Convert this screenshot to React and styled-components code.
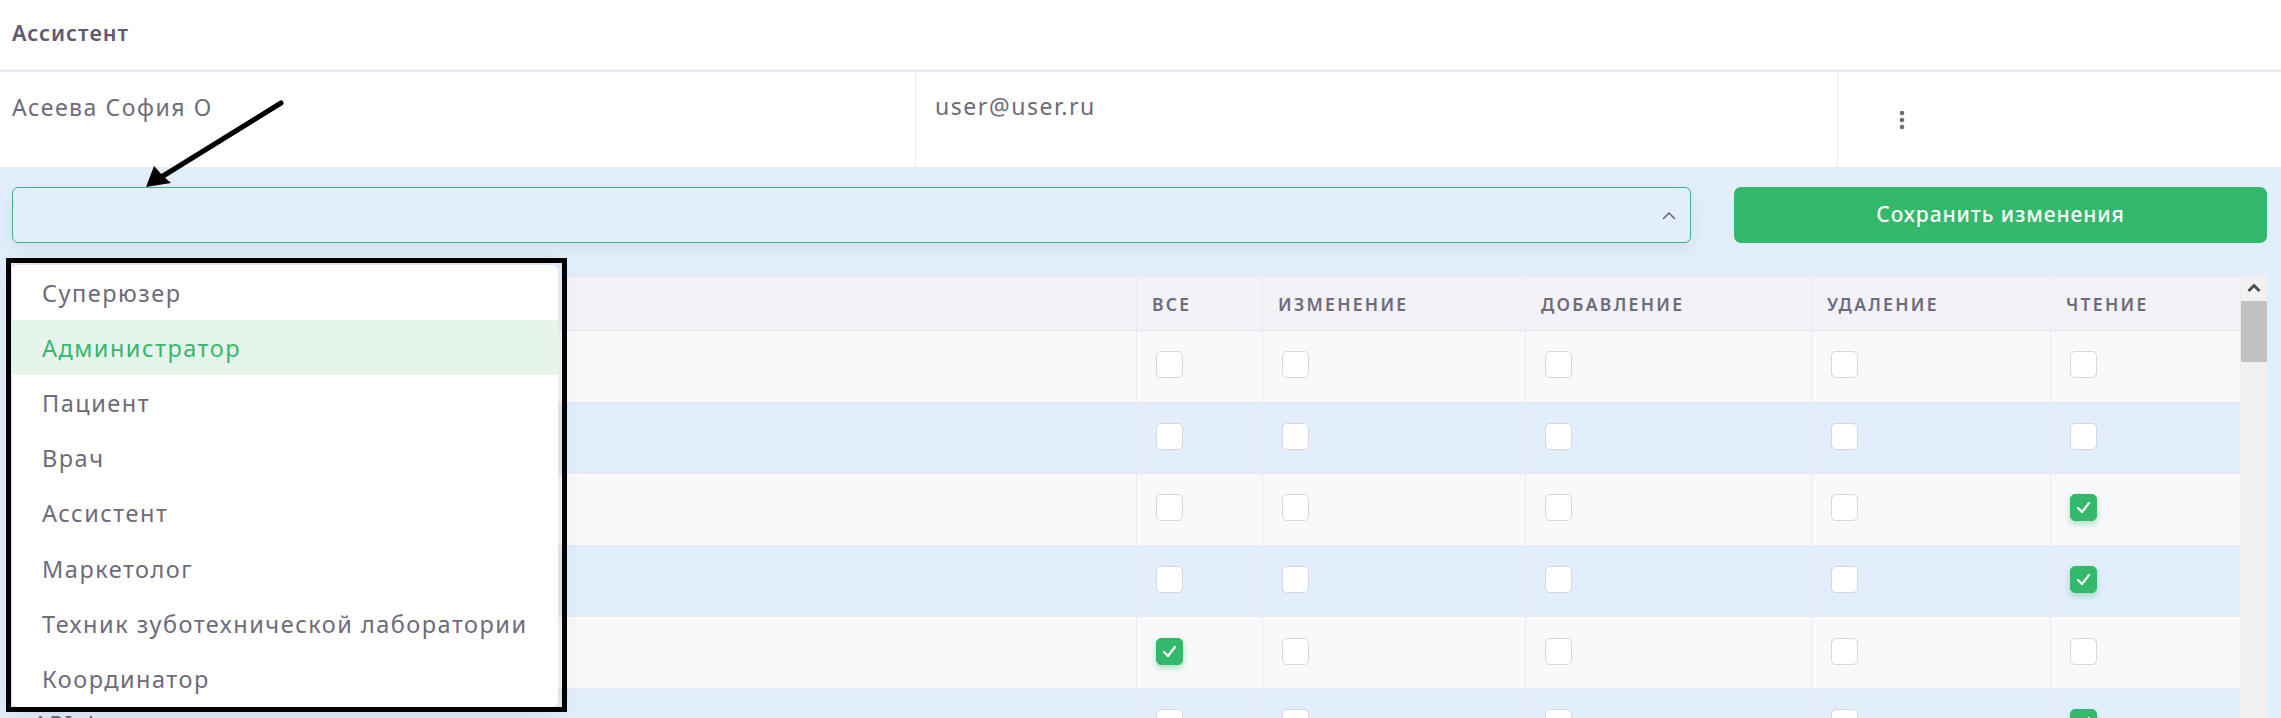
import React from "react";
import styled, { createGlobalStyle } from "styled-components";

const GlobalStyle = createGlobalStyle`
  html, body { margin: 0; padding: 0; }
  body {
    font-family: "Noto Sans", "Open Sans", sans-serif;
    color: #6e6b7b;
    background: #e3eefc;
    overflow: hidden;
  }
  * { box-sizing: border-box; }
`;

const Page = styled.div`
  position: relative;
  width: 2281px;
  height: 718px;
  overflow: hidden;
  display: flex;
  flex-direction: column;
`;

const TitleBar = styled.div`
  height: 72px;
  flex: none;
  background: #fff;
  border-bottom: 3px solid #ebe9f3;
  padding: 0 0 4px 12px;
  display: flex;
  align-items: center;
  font-size: 21.5px;
  font-weight: 600;
  color: #5e5873;
  letter-spacing: 1px;
`;

const UserRow = styled.div`
  height: 96px;
  flex: none;
  background: #fff;
  border-bottom: 1px solid #ebe9f1;
  display: grid;
  grid-template-columns: 916px 922px 1fr;
`;

const UserCell = styled.div`
  padding: ${(p) => p.$pad || "20px 12px"};
  border-right: ${(p) => (p.$last ? "none" : "1px solid #ebe9f1")};
  font-size: 23px;
  line-height: 30px;
  letter-spacing: 1.55px;
  color: #6e6b7b;
  display: flex;
  align-items: ${(p) => (p.$center ? "center" : "flex-start")};
`;

const BlueSection = styled.div`
  flex: 1;
  background: #e3eefc;
  padding: 19px 14px 0 12px;
  display: flex;
  flex-direction: column;
  min-height: 0;
`;

const Controls = styled.div`
  display: flex;
  gap: 43px;
  height: 56px;
  flex: none;
`;

const SelectBox = styled.div`
  flex: 1;
  border: 1px solid #3db57a;
  border-radius: 6px;
  background: #e3eefc;
  box-shadow: 0 6px 16px rgba(34, 41, 47, 0.08);
  display: flex;
  align-items: center;
  justify-content: flex-end;
  padding-right: 14px;
`;

const SaveButton = styled.button`
  width: 533px;
  flex: none;
  border: none;
  border-radius: 7px;
  background: #34b86c;
  color: #fff;
  font-family: "Noto Sans", "Open Sans", sans-serif;
  font-size: 21px;
  font-weight: 500;
  letter-spacing: 0.9px;
  padding: 0 0 2px;
  cursor: pointer;
`;

const TableWrap = styled.div`
  margin-top: 33px;
  display: flex;
  flex: 1;
  min-height: 0;
`;

const Table = styled.div`
  width: 2228px;
  flex: none;
  display: flex;
  flex-direction: column;
`;

const Row = styled.div`
  display: grid;
  grid-template-columns: 1125px 126px 263px 286px 239px 189px;
  height: ${(p) => (p.$head ? "55px" : "71.6px")};
  flex: none;
  background: ${(p) => (p.$head ? "#f3f2f7" : p.$alt ? "#e3eefc" : "#f9f9fb")};
  border-top: ${(p) => (p.$head ? "1px solid #ebe9f1" : "none")};
  border-bottom: 1px solid #ebe9f1;
`;

const HeadCell = styled.div`
  display: flex;
  align-items: center;
  padding-left: 15px;
  border-right: ${(p) => (p.$last ? "none" : "1px solid #ebe9f1")};
  font-size: 17.5px;
  font-weight: 600;
  text-transform: uppercase;
  letter-spacing: 2.3px;
  color: #6e6b7b;
`;

const Cell = styled.div`
  display: flex;
  align-items: center;
  padding-left: ${(p) => (p.$first ? "21px" : "19px")};
  border-right: ${(p) => (p.$last ? "none" : "1px solid #ebe9f1")};
  font-size: 23px;
  letter-spacing: 1.5px;
  color: #6e6b7b;
  white-space: nowrap;
`;

const Box = styled.span`
  width: 27px;
  height: 27px;
  border-radius: 5px;
  border: 1px solid ${(p) => (p.$on ? "#34b86c" : "#d8d6de")};
  background: ${(p) => (p.$on ? "#34b86c" : "#fff")};
  box-shadow: ${(p) => (p.$on ? "0 3px 6px rgba(52, 184, 108, 0.4)" : "none")};
  display: flex;
  align-items: center;
  justify-content: center;
  margin-top: -3px;
`;

const ScrollBar = styled.div`
  width: 26px;
  flex: none;
  margin-left: 1px;
  background: #f1f1f1;
  display: flex;
  flex-direction: column;
  margin-top: -1px;
`;

const ScrollArrow = styled.div`
  height: 26px;
  display: flex;
  align-items: center;
  justify-content: center;
`;

const ScrollThumb = styled.div`
  height: 61px;
  background: #c1c1c1;
`;

const Menu = styled.div`
  position: absolute;
  left: 12px;
  top: 265px;
  width: 546px;
  background: #fff;
  border-radius: 6px;
  box-shadow: 0 5px 25px rgba(34, 41, 47, 0.12);
  overflow: hidden;
  z-index: 5;
`;

const MenuItem = styled.div`
  height: 55.2px;
  display: flex;
  align-items: center;
  padding-left: 30px;
  font-size: 23.5px;
  letter-spacing: 1.5px;
  color: ${(p) => (p.$active ? "#34b86c" : "#6e6b7b")};
  background: ${(p) => (p.$active ? "#e6f5ec" : "#fff")};
  white-space: nowrap;
`;

const Annotation = styled.div`
  position: absolute;
  left: 6px;
  top: 258px;
  width: 561px;
  height: 454px;
  border: 5px solid #000;
  z-index: 6;
  pointer-events: none;
`;

const ArrowSvg = styled.svg`
  position: absolute;
  left: 0;
  top: 0;
  z-index: 7;
  pointer-events: none;
`;

const Check = () => (
  <svg width="17" height="17" viewBox="0 0 17 17">
    <polyline points="3,9 7,13 14,4" fill="none" stroke="#fff" strokeWidth="2.2" strokeLinecap="round" strokeLinejoin="round" />
  </svg>
);

const columns = ["Все", "Изменение", "Добавление", "Удаление", "Чтение"];

const rows = [
  { label: "Пользователи", checks: [0, 0, 0, 0, 0] },
  { label: "Роли", checks: [0, 0, 0, 0, 0] },
  { label: "Пациенты", checks: [0, 0, 0, 0, 1] },
  { label: "Приёмы", checks: [0, 0, 0, 0, 1] },
  { label: "Расписание", checks: [1, 0, 0, 0, 0] },
  { label: "API Филиалы", checks: [0, 0, 0, 0, 1] },
];

const roles = [
  "Суперюзер",
  "Администратор",
  "Пациент",
  "Врач",
  "Ассистент",
  "Маркетолог",
  "Техник зуботехнической лаборатории",
  "Координатор",
];

export default function App() {
  return (
    <Page>
      <GlobalStyle />
      <TitleBar>Ассистент</TitleBar>
      <UserRow>
        <UserCell>Асеева София О</UserCell>
        <UserCell $pad="19px 19px">user@user.ru</UserCell>
        <UserCell $last $center $pad="0 0 0 58px">
          <svg width="12" height="24" viewBox="0 0 12 24">
            <circle cx="6" cy="5" r="2.3" fill="#6e6b7b" />
            <circle cx="6" cy="12" r="2.3" fill="#6e6b7b" />
            <circle cx="6" cy="19" r="2.3" fill="#6e6b7b" />
          </svg>
        </UserCell>
      </UserRow>
      <BlueSection>
        <Controls>
          <SelectBox>
            <svg width="14" height="9" viewBox="0 0 14 9">
              <polyline points="1.5,7.5 7,2 12.5,7.5" fill="none" stroke="#6e6b7b" strokeWidth="1.7" strokeLinecap="round" strokeLinejoin="round" />
            </svg>
          </SelectBox>
          <SaveButton>Сохранить изменения</SaveButton>
        </Controls>
        <TableWrap>
          <Table>
            <Row $head>
              <HeadCell />
              {columns.map((c, i) => (
                <HeadCell key={c} $last={i === columns.length - 1}>
                  {c}
                </HeadCell>
              ))}
            </Row>
            {rows.map((r, ri) => (
              <Row key={r.label} $alt={ri % 2 === 1}>
                <Cell $first>{r.label}</Cell>
                {r.checks.map((on, ci) => (
                  <Cell key={ci} $last={ci === r.checks.length - 1}>
                    <Box $on={!!on}>{on ? <Check /> : null}</Box>
                  </Cell>
                ))}
              </Row>
            ))}
          </Table>
          <ScrollBar>
            <ScrollArrow>
              <svg width="14" height="10" viewBox="0 0 14 10">
                <polyline points="1.5,8 7,2.5 12.5,8" fill="none" stroke="#505050" strokeWidth="3" />
              </svg>
            </ScrollArrow>
            <ScrollThumb />
          </ScrollBar>
        </TableWrap>
      </BlueSection>

      <Menu>
        {roles.map((r) => (
          <MenuItem key={r} $active={r === "Администратор"}>
            {r}
          </MenuItem>
        ))}
      </Menu>
      <Annotation />
      <ArrowSvg width="300" height="200" viewBox="0 0 300 200">
        <line x1="281" y1="103" x2="163" y2="176" stroke="#000" strokeWidth="5" strokeLinecap="round" />
        <polygon points="146,187 154,166 163,176 171,183" fill="#000" />
      </ArrowSvg>
    </Page>
  );
}
